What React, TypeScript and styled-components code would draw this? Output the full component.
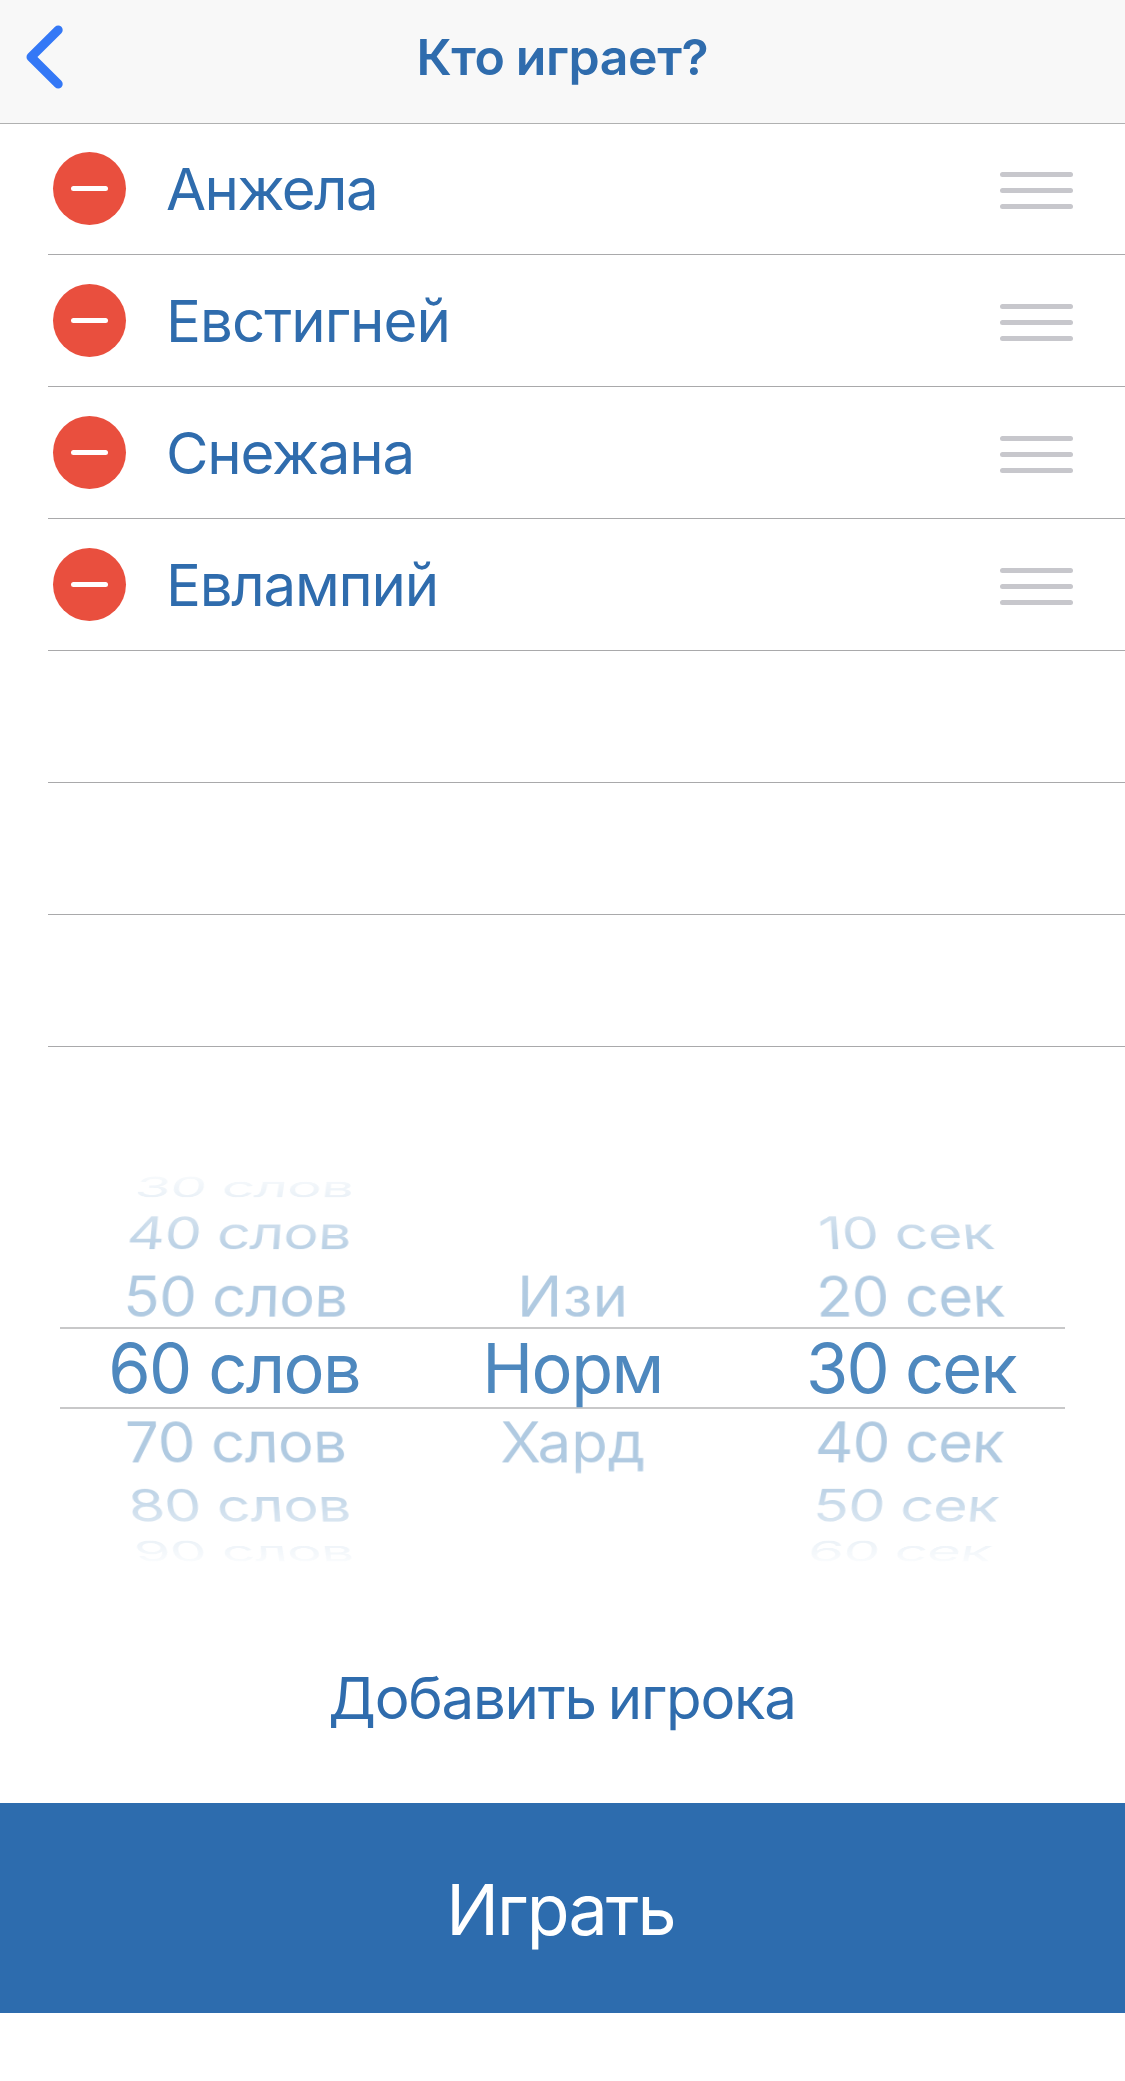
import React from "react";
import styled, { createGlobalStyle } from "styled-components";

const WHEEL_RADIUS = 222;
const WHEEL_STEP = 19.26;

type Label = { text: string; tracking: number };
type WheelRow = Label & { offset: number };

const players: Label[] = [
  { text: "Анжела", tracking: -1.55 },
  { text: "Евстигней", tracking: -0.95 },
  { text: "Снежана", tracking: -1.2 },
  { text: "Евлампий", tracking: -1.25 },
];

const emptyRows = [5, 6, 7];

const wheels: { name: string; rows: WheelRow[] }[] = [
  {
    name: "words",
    rows: [
      { offset: 3, text: "30 слов", tracking: -0.75 },
      { offset: 2, text: "40 слов", tracking: -0.75 },
      { offset: 1, text: "50 слов", tracking: -0.75 },
      { offset: 0, text: "60 слов", tracking: -1.65 },
      { offset: -1, text: "70 слов", tracking: -0.75 },
      { offset: -2, text: "80 слов", tracking: -0.75 },
      { offset: -3, text: "90 слов", tracking: -0.75 },
    ],
  },
  {
    name: "level",
    rows: [
      { offset: 1, text: "Изи", tracking: 0.5 },
      { offset: 0, text: "Норм", tracking: -1.5 },
      { offset: -1, text: "Хард", tracking: 0 },
    ],
  },
  {
    name: "time",
    rows: [
      { offset: 2, text: "10 сек", tracking: -0.6 },
      { offset: 1, text: "20 сек", tracking: -0.75 },
      { offset: 0, text: "30 сек", tracking: -1.9 },
      { offset: -1, text: "40 сек", tracking: -1 },
      { offset: -2, text: "50 сек", tracking: -0.9 },
      { offset: -3, text: "60 сек", tracking: -0.8 },
    ],
  },
];

const GlobalStyle = createGlobalStyle`
  body {
    margin: 0;
    background: #fff;
  }
  *, *::before, *::after {
    box-sizing: border-box;
  }
`;

const Screen = styled.main`
  width: 1125px;
  height: 2081px;
  overflow: hidden;
  display: flex;
  flex-direction: column;
  background: #fff;
  color: #2f6cad;
  font-family: Inter, "Noto Sans", sans-serif;
`;

const NavBar = styled.header`
  flex: none;
  height: 124px;
  display: grid;
  grid-template-columns: 120px 1fr 120px;
  align-items: center;
  padding-bottom: 9px;
  background: #f8f8f8;
  border-bottom: 1px solid #b0b1b1;
`;

const BackButton = styled.button`
  display: flex;
  margin: 0;
  padding: 0 0 0 26px;
  border: 0;
  background: none;
`;

const Title = styled.h1`
  margin: 0;
  text-align: center;
  font-size: 50px;
  line-height: 60px;
  font-weight: 600;
  letter-spacing: -0.4px;
  word-spacing: -1px;
`;

const PlayerList = styled.ul`
  flex: none;
  margin: -1px 0 0;
  padding: 0;
  list-style: none;
`;

const PlayerRow = styled.li`
  height: 132px;
  margin-left: 48px;
  padding: 0 52px 0 5px;
  display: flex;
  align-items: center;
  border-bottom: 1px solid #a9a9ab;
`;

const RemoveButton = styled.button`
  flex: none;
  width: 73px;
  height: 73px;
  margin: 0;
  padding: 0;
  display: flex;
  align-items: center;
  justify-content: center;
  border: 0;
  border-radius: 50%;
  background: #e94f3e;

  &::before {
    content: "";
    width: 37px;
    height: 5px;
    border-radius: 3px;
    background: #fff;
  }
`;

const PlayerName = styled.span<{ $tracking: number }>`
  flex: 1;
  margin-left: 40px;
  padding-top: 1px;
  font-size: 58.2px;
  line-height: 70px;
  letter-spacing: ${(p) => p.$tracking}px;
`;

const DragHandle = styled.span`
  display: grid;
  gap: 11px;
  width: 73px;
  padding-top: 4px;
`;

const HandleBar = styled.span`
  height: 5px;
  border-radius: 2.5px;
  background: #c7c7cc;
`;

const Picker = styled.section`
  flex: none;
  height: 474px;
  margin-top: 84px;
  display: grid;
  align-items: center;
`;

const SelectionBand = styled.div`
  grid-area: 1 / 1;
  height: 82px;
  margin: 0 60px;
  border: solid #c8c8c9;
  border-width: 2px 0;
`;

const WheelFade = styled.div`
  grid-area: 1 / 1;
  height: 474px;
  mask-image: linear-gradient(
    to bottom,
    transparent 30px,
    rgba(0, 0, 0, 0.12) 48px,
    rgba(0, 0, 0, 0.25) 65px,
    rgba(0, 0, 0, 0.55) 84px,
    rgba(0, 0, 0, 0.88) 118px,
    #000 145px,
    #000 329px,
    rgba(0, 0, 0, 0.85) 356px,
    rgba(0, 0, 0, 0.5) 389px,
    rgba(0, 0, 0, 0.25) 408px,
    rgba(0, 0, 0, 0.08) 429px,
    transparent 444px
  );
`;

const Wheels = styled.div`
  height: 474px;
  padding: 2px 45px 0 65px;
  display: grid;
  grid-template-columns: repeat(3, 1fr);
  perspective: 3300px;
  perspective-origin: 562.5px 50%;
`;

const Wheel = styled.div`
  display: grid;
  place-items: center;
  transform-style: preserve-3d;
  transform: translateZ(-${WHEEL_RADIUS}px);
`;

const WheelItem = styled.div<{ $offset: number; $tracking: number }>`
  grid-area: 1 / 1;
  white-space: nowrap;
  line-height: 72px;
  font-size: ${(p) => (p.$offset === 0 ? 68.5 : 60)}px;
  color: ${(p) => (p.$offset === 0 ? "#4e88be" : "#b0cae1")};
  letter-spacing: ${(p) => p.$tracking}px;
  transform: rotateX(${(p) => p.$offset * WHEEL_STEP}deg) translateZ(${WHEEL_RADIUS}px);
`;

const AddButton = styled.button`
  flex: none;
  height: 198px;
  margin: 0;
  padding: 0 1px 12px 0;
  border: 0;
  background: none;
  color: inherit;
  font-family: inherit;
  font-size: 58.2px;
  letter-spacing: -1.25px;
  word-spacing: -3px;
`;

const PlayButton = styled.button`
  flex: none;
  height: 210px;
  margin: 0;
  padding: 3px 4px 0 0;
  border: 0;
  background: #2d6cae;
  color: #fff;
  font-family: inherit;
  font-size: 70px;
  letter-spacing: -1.9px;
`;

function BackIcon() {
  return (
    <svg width="38" height="64" viewBox="0 0 38 64" fill="none">
      <path
        d="M32.2 5 5 32 32.2 59"
        stroke="#3478f6"
        strokeWidth="9"
        strokeLinecap="round"
        strokeLinejoin="round"
      />
    </svg>
  );
}

export default function App() {
  return (
    <Screen>
      <GlobalStyle />
      <NavBar>
        <BackButton aria-label="Назад">
          <BackIcon />
        </BackButton>
        <Title>Кто играет?</Title>
      </NavBar>

      <PlayerList>
        {players.map((player) => (
          <PlayerRow key={player.text}>
            <RemoveButton aria-label="Удалить" />
            <PlayerName $tracking={player.tracking}>{player.text}</PlayerName>
            <DragHandle>
              <HandleBar />
              <HandleBar />
              <HandleBar />
            </DragHandle>
          </PlayerRow>
        ))}
        {emptyRows.map((row) => (
          <PlayerRow key={row} />
        ))}
      </PlayerList>

      <Picker>
        <SelectionBand />
        <WheelFade>
          <Wheels>
            {wheels.map((wheel) => (
              <Wheel key={wheel.name}>
                {wheel.rows.map((row) => (
                  <WheelItem key={row.text} $offset={row.offset} $tracking={row.tracking}>
                    {row.text}
                  </WheelItem>
                ))}
              </Wheel>
            ))}
          </Wheels>
        </WheelFade>
      </Picker>

      <AddButton>Добавить игрока</AddButton>
      <PlayButton>Играть</PlayButton>
    </Screen>
  );
}
